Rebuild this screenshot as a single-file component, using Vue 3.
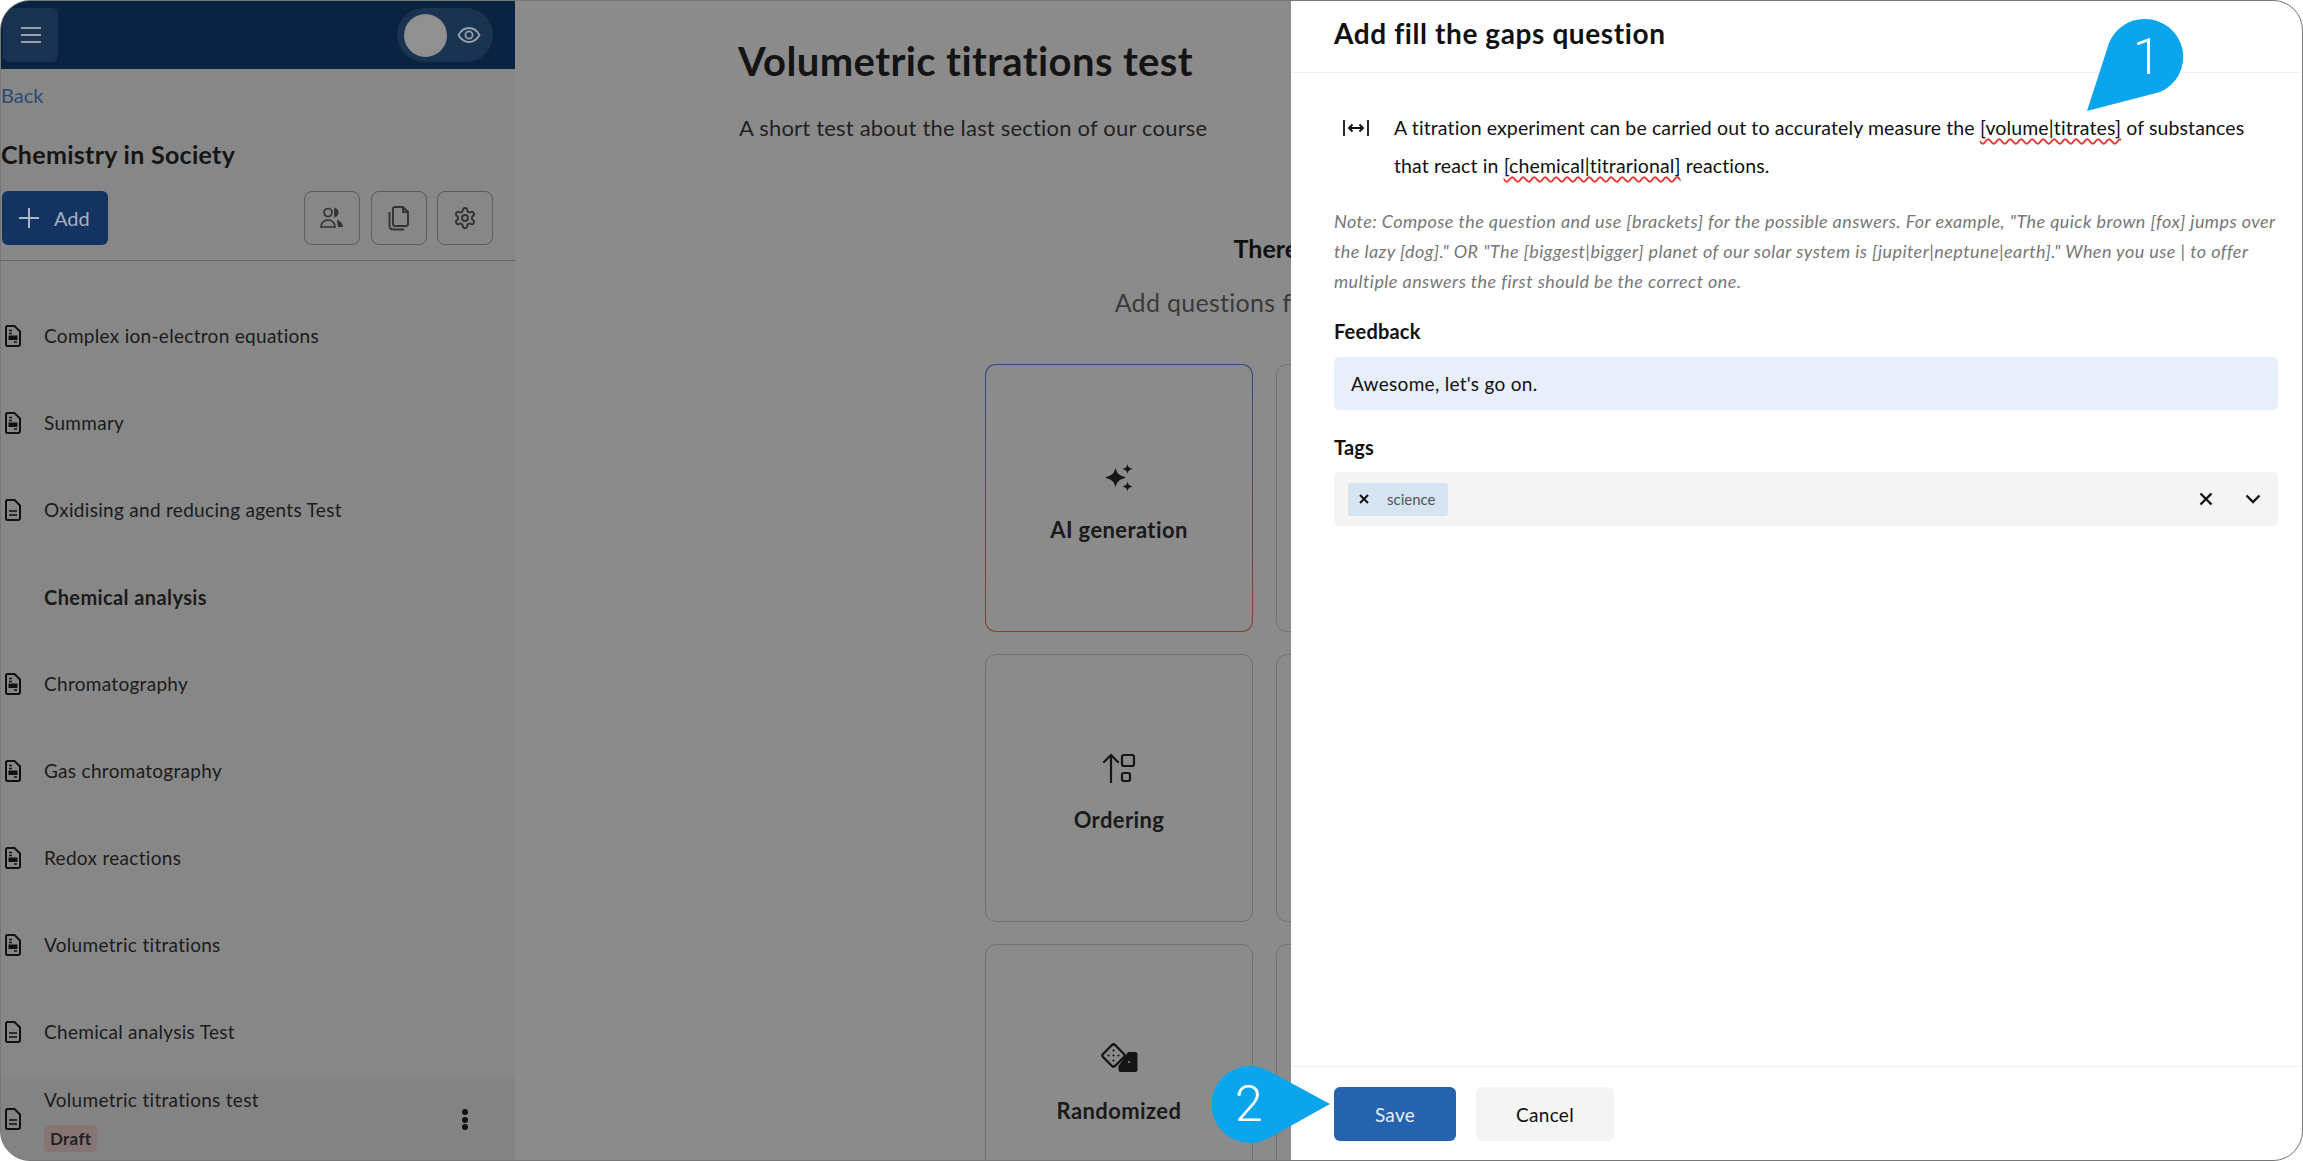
<script setup>
const rows = [
  { t: 'Complex ion-electron equations', k: 'fill' },
  { t: 'Summary', k: 'fill' },
  { t: 'Oxidising and reducing agents Test', k: 'line' },
  { t: 'Chemical analysis', k: 'head' },
  { t: 'Chromatography', k: 'fill' },
  { t: 'Gas chromatography', k: 'fill' },
  { t: 'Redox reactions', k: 'fill' },
  { t: 'Volumetric titrations', k: 'fill' },
  { t: 'Chemical analysis Test', k: 'line' }
]
const cards = [
  { t: 'AI generation', i: 'ai' },
  { t: '', i: '' },
  { t: 'Ordering', i: 'order' },
  { t: '', i: '' },
  { t: 'Randomized', i: 'dice' },
  { t: '', i: '' }
]
</script>

<template>
  <div class="frame">
    <aside class="side">
      <div class="topbar">
        <div class="burger">
          <svg width="24" height="20" viewBox="0 0 24 20"><path d="M2 3h20M2 10h20M2 17h20" stroke="#96a0ad" stroke-width="2"/></svg>
        </div>
        <div class="pill">
          <span class="avatar"></span>
          <svg width="24" height="24" viewBox="0 0 24 24" fill="none" stroke="#96a0ad" stroke-width="1.8"><path d="M1.5 12C4 7.5 7.5 5 12 5s8 2.500 10.500 7c-2.500 4.500-6 7-10.500 7s-8-2.500-10.500-7z"/><circle cx="12" cy="12" r="3.600"/></svg>
        </div>
      </div>
      <a class="back">Back</a>
      <h2 class="course">Chemistry in Society</h2>
      <div class="tools">
        <button class="add">
          <svg width="22" height="22" viewBox="0 0 22 22"><path d="M11 1v20M1 11h20" stroke="#aab4c2" stroke-width="2"/></svg>
          <span>Add</span>
        </button>
        <span class="spacer"></span>
        <button class="tool">
          <svg width="26" height="24" viewBox="0 0 26 24" fill="none" stroke="#333" stroke-width="1.700"><circle cx="9" cy="6.500" r="4"/><path d="M2 21c0-4 3-7 7-7s7 3 7 7z"/><path d="M16 2.800a4 4 0 0 1 0 7.500z" fill="#333"/><path d="M18 14c3 .5 5.500 3 6 7h-5z" fill="#333" stroke="none"/></svg>
        </button>
        <button class="tool">
          <svg width="24" height="26" viewBox="0 0 24 26" fill="none" stroke="#333" stroke-width="1.900"><path d="M8 2h8l5 5v12a2 2 0 0 1-2 2H8a2 2 0 0 1-2-2V4a2 2 0 0 1 2-2z"/><path d="M16 2v5h5"/><path d="M2.500 7v14a3.500 3.500 0 0 0 3.500 3.500h11"/></svg>
        </button>
        <button class="tool">
          <svg width="24" height="24" viewBox="0 0 24 24" fill="none" stroke="#333" stroke-width="1.900"><path d="M12.220 2h-.44a2 2 0 0 0-2 2v.18a2 2 0 0 1-1 1.730l-.43.25a2 2 0 0 1-2 0l-.15-.08a2 2 0 0 0-2.730.73l-.22.38a2 2 0 0 0 .73 2.730l.15.1a2 2 0 0 1 1 1.720v.51a2 2 0 0 1-1 1.740l-.15.09a2 2 0 0 0-.73 2.730l.22.38a2 2 0 0 0 2.730.73l.15-.08a2 2 0 0 1 2 0l.43.25a2 2 0 0 1 1 1.730V20a2 2 0 0 0 2 2h.44a2 2 0 0 0 2-2v-.18a2 2 0 0 1 1-1.730l.43-.25a2 2 0 0 1 2 0l.15.08a2 2 0 0 0 2.730-.73l.22-.39a2 2 0 0 0-.73-2.730l-.15-.08a2 2 0 0 1-1-1.740v-.5a2 2 0 0 1 1-1.740l.15-.09a2 2 0 0 0 .73-2.730l-.22-.38a2 2 0 0 0-2.730-.73l-.15.08a2 2 0 0 1-2 0l-.43-.25a2 2 0 0 1-1-1.730V4a2 2 0 0 0-2-2z"/><circle cx="12" cy="12" r="3"/></svg>
        </button>
      </div>
      <div class="list">
        <div v-for="r in rows" :key="r.t" class="row" :class="{ head: r.k === 'head' }">
          <svg v-if="r.k !== 'head'" class="doc" width="16" height="22" viewBox="0 0 16 22" fill="none" stroke="#111" stroke-width="2"><path d="M2.500 1h7L15 6.500V19a2 2 0 0 1-2 2H2.500a1.500 1.500 0 0 1-1.500-1.500v-17A1.500 1.500 0 0 1 2.500 1z"/>
            <template v-if="r.k === 'fill'"><path d="M4 5.500h3M4 8.500h3M9 17h3" stroke-width="1.400"/><rect x="3.500" y="10.500" width="9" height="4.500" fill="#111" stroke="none"/></template>
            <template v-else><path d="M4 12h8M4 16h8" stroke-width="1.600"/></template>
          </svg>
          <span>{{ r.t }}</span>
        </div>
        <div class="row current">
          <svg class="doc" width="16" height="22" viewBox="0 0 16 22" fill="none" stroke="#111" stroke-width="2"><path d="M2.500 1h7L15 6.500V19a2 2 0 0 1-2 2H2.500a1.500 1.500 0 0 1-1.500-1.500v-17A1.500 1.500 0 0 1 2.500 1z"/><path d="M4 12h8M4 16h8" stroke-width="1.600"/></svg>
          <div class="cur-text">
            <span>Volumetric titrations test</span>
            <span class="draft">Draft</span>
          </div>
          <span class="kebab"><i></i><i></i><i></i></span>
        </div>
      </div>
    </aside>

    <main class="main">
      <div class="main-inner">
        <h1 class="title">Volumetric titrations test</h1>
        <p class="sub">A short test about the last section of our course</p>
        <div class="empty">
          <h3>There are no questions here yet</h3>
          <p>Add questions from the options below to get started</p>
        </div>
        <div class="grid">
          <div v-for="(c, n) in cards" :key="n" class="card" :class="{ ai: c.i === 'ai' }">
            <svg v-if="c.i === 'ai'" width="30" height="30" viewBox="0 0 30 30" fill="#151515"><path d="M11.500 4.500c1.200 5.500 2.800 7.500 10.500 10-7.700 2.500-9.300 4.500-10.500 10-1.200-5.500-2.800-7.500-10.500-10 7.700-2.500 9.300-4.500 10.500-10z"/><path d="M23.500 1c.6 3 1.500 4 5 5-3.500 1-4.400 2-5 5-.6-3-1.500-4-5-5 3.500-1 4.400-2 5-5z"/><path d="M23.500 18.500c.6 3 1.500 4 5 5-3.500 1-4.400 2-5 5-.6-3-1.500-4-5-5 3.500-1 4.400-2 5-5z"/></svg>
            <svg v-if="c.i === 'order'" width="34" height="30" viewBox="0 0 34 30" fill="none" stroke="#151515" stroke-width="2.200" stroke-linecap="round"><path d="M9 29V2M2 9l7-7 7 7"/><rect x="20" y="2" width="12" height="11" rx="2"/><rect x="20" y="20" width="8" height="8" rx="2"/></svg>
            <svg v-if="c.i === 'dice'" width="38" height="32" viewBox="0 0 38 32" fill="none"><rect x="5" y="5" width="17" height="17" rx="2.500" transform="rotate(45 13.500 13.500)" stroke="#151515" stroke-width="2.400"/><g fill="#151515"><circle cx="13.500" cy="8.500" r="1.100"/><circle cx="8.500" cy="13.500" r="1.100"/><circle cx="13.500" cy="13.500" r="1.100"/><circle cx="18.500" cy="13.500" r="1.100"/><circle cx="13.500" cy="18.500" r="1.100"/></g><path d="M28 10h7a2.500 2.500 0 0 1 2.500 2.500v15A2.500 2.500 0 0 1 35 30H21a2.500 2.500 0 0 1-2.500-2.500V24z" fill="#151515"/><circle cx="29" cy="20" r="1" fill="#888"/></svg>
            <span v-if="c.t">{{ c.t }}</span>
          </div>
        </div>
      </div>
    </main>

    <section class="drawer">
      <header class="d-head">Add fill the gaps question</header>
      <div class="d-body">
        <div class="editor">
          <svg class="width-ic" width="28" height="18" viewBox="0 0 28 18" fill="none" stroke="#111" stroke-width="2"><path d="M2 1v16M26 1v16M7 9h14M10.500 5.500 7 9l3.500 3.500M17.500 5.500 21 9l-3.500 3.500" stroke-width="1.800"/></svg>
          <p>A titration experiment can be carried out to accurately measure the <span class="wavy">[volume|titrates]</span> of substances<br>that react in <span class="wavy">[chemical|titrarional]</span> reactions.</p>
        </div>
        <p class="note">Note: Compose the question and use [brackets] for the possible answers. For example, "The quick brown [fox] jumps over<br>the lazy [dog]." OR "The [biggest|bigger] planet of our solar system is [jupiter|neptune|earth]." When you use | to offer<br>multiple answers the first should be the correct one.</p>
        <label class="lbl fb">Feedback</label>
        <div class="input">Awesome, let's go on.</div>
        <label class="lbl tg">Tags</label>
        <div class="select">
          <span class="chip">
            <svg width="10" height="10" viewBox="0 0 10 10"><path d="M1 1l8 8M9 1l-8 8" stroke="#111" stroke-width="2"/></svg>
            <em>science</em>
          </span>
          <span class="spacer"></span>
          <svg width="14" height="14" viewBox="0 0 14 14"><path d="M1.500 1.500l11 11M12.500 1.500l-11 11" stroke="#111" stroke-width="2.400"/></svg>
          <svg class="chev" width="16" height="10" viewBox="0 0 16 10" fill="none"><path d="M1.500 1.500 8 8l6.500-6.500" stroke="#111" stroke-width="2.400"/></svg>
        </div>
      </div>
      <footer class="d-foot">
        <button class="save">Save</button>
        <button class="cancel">Cancel</button>
      </footer>
    </section>

    <div class="callout c1">
      <svg width="100" height="96" viewBox="0 0 100 96"><path d="M58 4a38 38 0 0 1 15 73L0 96 22 28A38 38 0 0 1 58 4z" fill="#0aa5ec"/></svg>
      <span class="one">1</span>
    </div>
    <div class="callout c2">
      <svg width="120" height="78" viewBox="0 0 120 78"><path d="M38 0c7 0 13 2 19 5l61 33-61 34c-6 3-12 5-19 5a38.500 38.500 0 0 1 0-77z" fill="#0aa5ec"/></svg>
      <span class="two">2</span>
    </div>
  </div>
</template>

<style scoped>
.frame {
  position: relative;
  box-sizing: border-box;
  width: 2303px;
  height: 1161px;
  display: flex;
  overflow: hidden;
  background: #8b8b8b;
  border: 1px solid #777;
  border-radius: 30px;
  font-family: "Lato", "Noto Sans", sans-serif;
  color: #1b1b1b;
}
.spacer { flex: 1; }
button { font-family: inherit; border: none; padding: 0; }

.side {
  width: 514px;
  flex: none;
  background: #878787;
  display: flex;
  flex-direction: column;
  height: 1200px;
}
.topbar {
  height: 68px;
  flex: none;
  background: #0a2340;
  display: flex;
  align-items: center;
  justify-content: space-between;
  padding: 0 22px 0 2px;
  box-sizing: border-box;
}
.burger {
  width: 55px;
  height: 54px;
  background: #1a3350;
  border-radius: 6px;
  display: flex;
  align-items: center;
  justify-content: center;
}
.pill {
  width: 96px;
  height: 54px;
  border-radius: 27px;
  background: #1a3350;
  display: flex;
  align-items: center;
  gap: 10px;
  padding-left: 7px;
  box-sizing: border-box;
}
.avatar { width: 43px; height: 43px; border-radius: 50%; background: #909090; }
.back { margin: 14px 0 0; font-size: 20px; line-height: 24px; color: #2a4a77; }
.course { margin: 30px 0 0; font-size: 25px; line-height: 34px; font-weight: 700; color: #151515; letter-spacing: .3px; }
.tools { display: flex; margin: 20px 22px 0 1px; align-items: stretch; height: 54px; gap: 10.5px; }
.add {
  width: 106px;
  background: #133360;
  border-radius: 6px;
  color: #a5b0c0;
  font-size: 20px;
  display: flex;
  align-items: center;
  gap: 14px;
  padding-left: 16px;
  box-sizing: border-box;
}
.tool {
  width: 56px;
  background: transparent;
  border: 1.500px solid #5b5b5b;
  border-radius: 8px;
  display: flex;
  align-items: center;
  justify-content: center;
  box-sizing: border-box;
}
.list { border-top: 1px solid #666; margin-top: 15px; padding-top: 31px; }
.row {
  height: 87px;
  display: flex;
  align-items: center;
  padding-left: 4px;
  gap: 23px;
  font-size: 19px;
  letter-spacing: .3px;
  color: #1b1b1b;
}
.row.head { padding-left: 43px; font-weight: 700; font-size: 20px; letter-spacing: .4px; }
.doc { flex: none; }
.current { background: #838383; height: 85px; position: relative; margin-top: 1px; }
.cur-text { display: flex; flex-direction: column; align-items: flex-start; gap: 14px; margin-top: 2px; }
.draft {
  background: #877474;
  border-radius: 5px;
  font-size: 17px;
  font-weight: 700;
  line-height: 27px;
  padding: 0 6px;
  color: #222;
}
.kebab {
  position: absolute;
  left: 461px;
  top: 33px;
  display: flex;
  flex-direction: column;
  gap: 1.500px;
}
.kebab i { width: 6px; height: 6px; border-radius: 50%; background: #111; }

.main {
  width: 776px;
  flex: none;
  overflow: hidden;
}
.main-inner { width: 1788px; padding-top: 34px; }
.title { margin: 0 0 0 223px; font-size: 40px; line-height: 52px; font-weight: 700; color: #141414; letter-spacing: .4px; }
.sub { margin: 27px 0 0 224px; font-size: 22px; line-height: 28px; color: #222; letter-spacing: .2px; }
.empty { text-align: center; margin-top: 90px; }
.empty h3 { margin: 0; font-size: 25px; line-height: 32px; font-weight: 700; color: #111; }
.empty p { margin: 22px 0 0; font-size: 25px; line-height: 32px; letter-spacing: .3px; color: #3a3a3a; }
.grid {
  display: grid;
  grid-template-columns: 268px 268px;
  gap: 22px 23px;
  margin: 46px 0 0 470px;
}
.card {
  height: 268px;
  box-sizing: border-box;
  border: 1.500px solid #727272;
  border-radius: 11px;
  padding-top: 10px;
  display: flex;
  flex-direction: column;
  align-items: center;
  justify-content: center;
  gap: 23px;
  font-size: 22px;
  letter-spacing: .4px;
  font-weight: 700;
  color: #1a1a1a;
}
.card.ai {
  border-color: transparent;
  background: linear-gradient(#8b8b8b, #8b8b8b) padding-box, linear-gradient(#2e4a85, #8f3d2c) border-box;
}

.drawer {
  flex: 1;
  min-width: 0;
  background: #fff;
  display: flex;
  flex-direction: column;
  color: #111;
}
.d-head {
  height: 72px;
  box-sizing: border-box;
  border-bottom: 1px solid #f0f0f0;
  padding: 14px 0 0 43px;
  font-size: 28px;
  letter-spacing: .6px;
  line-height: 36px;
  font-weight: 700;
}
.d-body { flex: 1; padding: 0 24px 0 43px; }
.editor { display: flex; margin-top: 36px; }
.width-ic { margin: 10px 24px 0 8px; flex: none; }
.editor p { margin: 0; font-size: 19.500px; letter-spacing: .12px; line-height: 38px; white-space: nowrap; }
.wavy { text-decoration: underline wavy #e53935 1.500px; text-underline-offset: 3px; }
.note {
  margin: 21px 0 0;
  font-size: 18px;
  letter-spacing: .43px;
  line-height: 30px;
  font-style: italic;
  color: #777;
  white-space: nowrap;
}
.lbl { display: block; font-size: 20px; line-height: 26px; font-weight: 700; letter-spacing: .2px; }
.fb { margin-top: 22px; }
.tg { margin-top: 24px; }
.input {
  margin-top: 13px;
  height: 53px;
  background: #e8effb;
  border-radius: 5px;
  padding-left: 17px;
  display: flex;
  align-items: center;
  font-size: 19px;
  letter-spacing: .3px;
}
.select {
  margin-top: 12px;
  height: 54px;
  background: #f4f4f4;
  border-radius: 5px;
  padding: 0 17px 0 14px;
  display: flex;
  align-items: center;
  gap: 32px;
}
.chip {
  width: 100px;
  height: 33px;
  box-sizing: border-box;
  background: #d6e4f1;
  border-radius: 3px;
  display: flex;
  align-items: center;
  padding-left: 11px;
  gap: 18px;
}
.chip em { font-style: normal; font-size: 15px; color: #555; }
.chev { margin-right: 0; }
.d-foot {
  height: 94px;
  box-sizing: border-box;
  border-top: 1px solid #f0f0f0;
  padding: 20px 0 0 43px;
  display: flex;
  gap: 20px;
  align-items: flex-start;
}
.save, .cancel { height: 54px; border-radius: 6px; font-size: 19px; letter-spacing: .3px; }
.save { width: 122px; background: #2563ae; color: #e8eef7; }
.cancel { width: 138px; background: #f4f4f4; color: #111; }

.callout { position: absolute; }
.callout span {
  position: absolute;
  font-family: "Roboto", sans-serif;
  font-weight: 300;
  font-size: 50px;
  line-height: 50px;
  color: #fff;
}
.c1 { left: 2086px; top: 14px; }
.one { left: 46px; top: 17px; }
.c2 { left: 1211px; top: 1065px; }
.two { left: 23px; top: 13px; }
</style>
